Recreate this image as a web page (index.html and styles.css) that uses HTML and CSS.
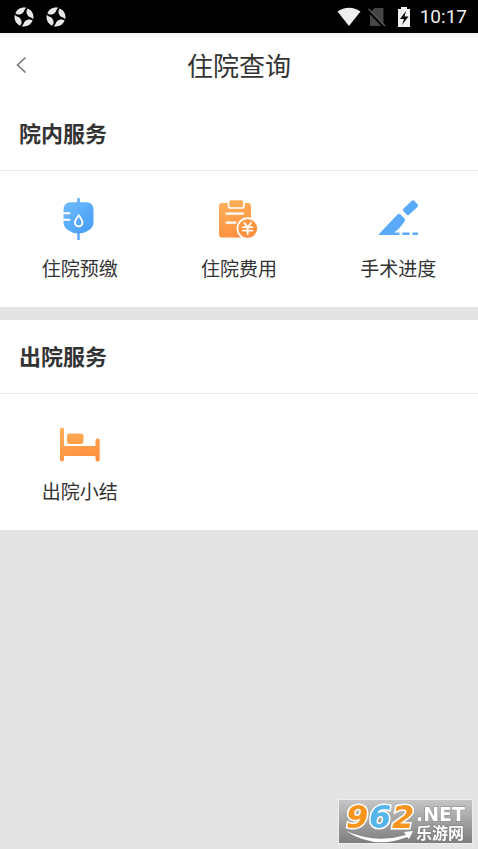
FILE: index.html
```html
<!DOCTYPE html>
<html lang="zh-CN">
<head>
<meta charset="utf-8">
<meta name="viewport" content="width=device-width, initial-scale=1">
<title>住院查询</title>
<link rel="stylesheet" href="styles.css">
</head>
<body>
<svg class="defs" width="0" height="0" aria-hidden="true">
  <defs>
    <linearGradient id="blue" x1="0" y1="0" x2="1" y2="1"><stop offset="0" stop-color="#6fbbff"/><stop offset="1" stop-color="#459cf5"/></linearGradient>
    <linearGradient id="orange" gradientUnits="userSpaceOnUse" x1="12" y1="2" x2="24" y2="42"><stop offset="0" stop-color="#ffb05a"/><stop offset="1" stop-color="#ff8d3c"/></linearGradient>
    <symbol id="swirl" viewBox="0 0 20 20">
      <g fill="#e8e8e8">
        <path id="blade" d="M1.400 6.200C3.200 2 7.500-.3 12.500.8 10.300 1.600 10.600 4.200 9 5.800 7 7.800 3.400 8.300 1.400 6.200Z"/>
        <use href="#blade" transform="rotate(90 10 10)"/>
        <use href="#blade" transform="rotate(180 10 10)"/>
        <use href="#blade" transform="rotate(270 10 10)"/>
      </g>
    </symbol>
  </defs>
</svg>

<div class="statusbar">
  <div class="notices">
    <svg width="20" height="20" aria-hidden="true"><use href="#swirl"/></svg>
    <svg width="20" height="20" aria-hidden="true"><use href="#swirl"/></svg>
  </div>
  <div class="system">
    <svg class="wifi" width="24" height="20" viewBox="0 0 24 20" aria-hidden="true"><path d="M.5 4.600C7-.6 17-.6 23.500 4.600L12 19Z" fill="#efefef"/></svg>
    <svg class="sim" width="18" height="20" viewBox="0 0 18 20" aria-hidden="true"><path d="M6.500 1H15.500V19H2V5.500Z" fill="#454545"/><path d="M0 3.500 15.500 20" stroke="#000" stroke-width="2"/><path d="M.5 1.800 17 19" stroke="#555" stroke-width="1.500"/></svg>
    <svg class="battery" width="14" height="20" viewBox="0 0 14 20" aria-hidden="true"><path d="M4 0H10V2H13V20H1V2H4Z" fill="#efefef"/><path d="M9 4 3 12H7L5 18 11.500 9.500H7.500Z" fill="#000"/></svg>
    <span class="clock">10:17</span>
  </div>
</div>

<header class="navbar">
  <button class="back" type="button" aria-label="返回">
    <svg width="12" height="18" viewBox="0 0 12 18" aria-hidden="true"><path d="M9.500 1.500 1.500 9 9.500 16.500" fill="none" stroke="#777" stroke-width="1.600"/></svg>
  </button>
  <h1 class="title">住院查询</h1>
</header>

<main class="sections">
  <section class="section">
    <h2 class="heading">院内服务</h2>
    <div class="grid">
      <a class="item" href="#prepay">
        <svg class="icon" viewBox="0 0 42 42" aria-hidden="true">
          <path d="M19.500 1V8M19.500 33V41.500" stroke="#56a8fa" stroke-width="2.400" stroke-linecap="round"/>
          <path d="M12 4.300H27Q34.500 4.500 34.500 12V25Q34 29.500 30 32 25 35.500 19.500 35.500T9 32Q5 29.500 4.500 25V12Q4.500 4.500 12 4.300Z" fill="url(#blue)"/>
          <path d="M4 15.300H10.500M4 21.700H10.500" stroke="#fff" stroke-width="2" stroke-linecap="round"/>
          <path d="M19.700 17.300C17.500 20.300 16 22.500 16 24.700A3.700 3.700 0 0 0 23.400 24.700C23.400 22.500 21.900 20.300 19.700 17.300Z" fill="none" stroke="#fff" stroke-width="1.900" stroke-linejoin="round"/>
        </svg>
        <span class="label">住院预缴</span>
      </a>
      <a class="item" href="#fees">
        <svg class="icon" viewBox="0 0 42 42" aria-hidden="true">
          <rect x="1" y="5" width="32" height="34.500" rx="3" fill="url(#orange)"/>
          <rect x="10.500" y="1.500" width="15.500" height="8.500" rx="2.500" fill="url(#orange)" stroke="#fff" stroke-width="1.700"/>
          <path d="M8.500 15.700H25M8.500 24.700H17.500" stroke="#fff" stroke-width="2.200" stroke-linecap="round"/>
          <circle cx="29.700" cy="30.500" r="10.300" fill="url(#orange)" stroke="#fff" stroke-width="1.700"/>
          <path d="M26.300 25 29.700 29 33.100 25M25 29.200H34.400M25 32.700H34.400M29.700 29V36.500" fill="none" stroke="#fff" stroke-width="1.700" stroke-linecap="round"/>
        </svg>
        <span class="label">住院费用</span>
      </a>
      <a class="item" href="#surgery">
        <svg class="icon" viewBox="0 0 42 42" aria-hidden="true">
          <g fill="#5aaafa">
            <path d="M2 36 20.500 16.500Q22 15 23.500 16.500L27.500 20.500Q28.700 22 27.500 23.500C24.500 28 21.500 31.500 17 34.500H22.500V37H2.500Q1.300 37 2 36Z"/>
            <rect x="26" y="5.500" width="15" height="8.500" rx="2" transform="rotate(-43 33.500 9.800)"/>
            <path d="M25.300 34.500H32.700V37H25.300ZM35.500 34.500H41V37H35.500Z"/>
          </g>
        </svg>
        <span class="label">手术进度</span>
      </a>
    </div>
  </section>

  <section class="section">
    <h2 class="heading">出院服务</h2>
    <div class="grid">
      <a class="item" href="#summary">
        <svg class="icon" viewBox="0 0 42 42" aria-hidden="true">
          <g fill="url(#orange)">
            <path d="M1 8.500Q1 6.500 3 6.500T5 8.500V25H36.500V19.500Q36.500 17.500 38.600 17.500T40.700 19.500V38.500Q40.700 40.500 38.600 40.500T36.500 38.500V35H5V38.500Q5 40.500 3 40.500T1 38.500Z"/>
            <rect x="8" y="12.500" width="16.500" height="10.500" rx="3"/>
          </g>
        </svg>
        <span class="label">出院小结</span>
      </a>
    </div>
  </section>
</main>

<div class="watermark">
  <svg width="135" height="45" viewBox="0 0 135 45" role="img" aria-label="962.NET 乐游网">
    <defs><linearGradient id="plate" x1="0" y1="0" x2="0" y2="1"><stop offset="0" stop-color="#c6c6c6"/><stop offset="1" stop-color="#7d7d7d"/></linearGradient></defs>
    <rect x=".5" y=".5" width="134" height="44" fill="url(#plate)" stroke="#ededed"/>
    <path d="M8 32Q38 45 68 36L66 33 75 32 71 40 69 38Q37 51 8 32Z" fill="#fff"/>
    <text class="digits" x="8" y="29"><tspan fill="#f7941d">9</tspan><tspan fill="#55b4e8" x="31">6</tspan><tspan fill="#f7941d" x="54">2</tspan></text>
    <text class="net" x="78" y="22">.NET</text>
    <text class="site" x="78" y="40">乐游网</text>
  </svg>
</div>
</body>
</html>
```
FILE: styles.css
```css
* {
  box-sizing: border-box;
}

body {
  margin: 0;
  min-height: 100vh;
  background: #e4e4e4;
  color: #333;
  font-family: "Noto Sans CJK SC", sans-serif;
}

.defs {
  position: absolute;
}

.statusbar {
  display: flex;
  align-items: center;
  justify-content: space-between;
  height: 33px;
  padding: 0 11px 0 14px;
  background: #000;
}

.notices {
  display: flex;
  gap: 12px;
}

.system {
  display: flex;
  align-items: center;
}

.sim {
  margin-left: 7px;
}

.battery {
  margin-left: 11px;
}

.clock {
  margin-left: 9px;
  color: #efefef;
  font: 19px/24px Roboto, sans-serif;
}

.navbar {
  display: grid;
  grid-template-columns: 48px 1fr 48px;
  align-items: center;
  height: 64px;
  background: linear-gradient(#f4f4f4, #fff 8px);
}

.back {
  display: flex;
  align-items: center;
  height: 48px;
  padding: 0 0 0 16px;
  border: 0;
  background: none;
}

.title {
  margin: 0;
  font-size: 26px;
  font-weight: 400;
  line-height: 40px;
  text-align: center;
}

.sections {
  display: grid;
  gap: 13px;
}

.section {
  background: #fff;
}

.heading {
  margin: 0;
  padding: 19px 19px 22px;
  border-bottom: 1px solid #ebebeb;
  font-size: 22px;
  font-weight: 700;
  line-height: 32px;
}

.grid {
  display: grid;
  grid-template-columns: repeat(3, 1fr);
}

.item {
  display: flex;
  flex-direction: column;
  align-items: center;
  gap: 15px;
  padding: 27px 0 26px;
  color: inherit;
  text-decoration: none;
}

.icon {
  width: 42px;
  height: 42px;
}

.label {
  font-size: 19px;
  line-height: 26px;
}

.watermark {
  position: fixed;
  right: 5px;
  bottom: 5px;
}

.watermark svg {
  display: block;
  overflow: visible;
}

.digits {
  font: italic 700 32px "DejaVu Sans", sans-serif;
  paint-order: stroke;
  stroke: #fff;
  stroke-width: 3px;
}

.net {
  fill: #fff;
  font: 700 19px "DejaVu Sans", sans-serif;
  paint-order: stroke;
  stroke: #8a8a8a;
  stroke-width: 1px;
}

.site {
  fill: #fff;
  font: 700 16px "Noto Sans CJK SC", sans-serif;
  paint-order: stroke;
  stroke: #777;
  stroke-width: 1px;
}
```
